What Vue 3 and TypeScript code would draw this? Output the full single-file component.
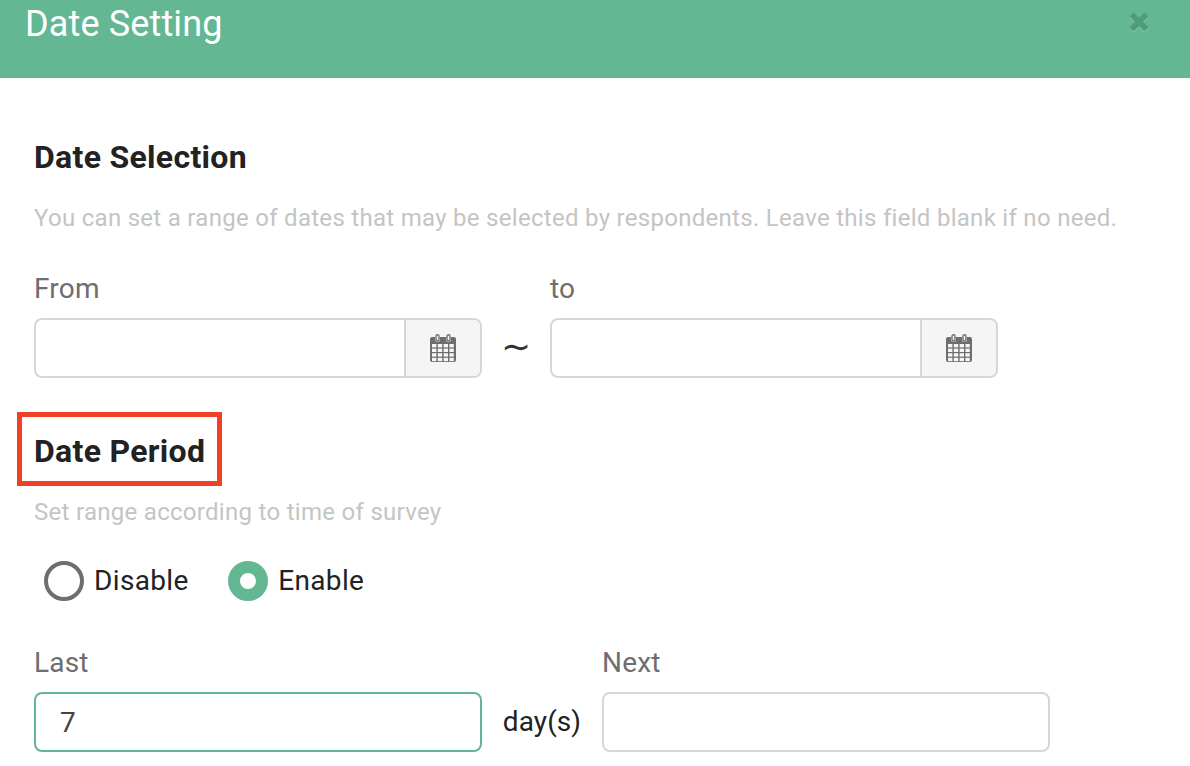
<script setup lang="ts">
const radios = [
  { label: 'Disable', on: false },
  { label: 'Enable', on: true },
]
const dateFields = [{ label: 'From' }, { label: 'to' }]
const cells: number[] = [0, 1, 2, 3]
</script>

<template>
  <div class="page">
    <header class="head">
      <span class="head-title">Date Setting</span>
      <svg class="close" width="22" height="23" viewBox="0 0 22 23">
        <path d="M3.5 4.5 L18.5 19.5 M18.5 4.5 L3.5 19.5" stroke="#8fcdb2" stroke-width="6" fill="none" />
        <path d="M3.5 3.5 L18.5 18.5 M18.5 3.5 L3.5 18.5" stroke="#4f9c7c" stroke-width="6" fill="none" />
      </svg>
    </header>
    <main class="body">
      <h2 class="title first">Date Selection</h2>
      <p class="hint">You can set a range of dates that may be selected by respondents. Leave this field blank if no need.</p>
      <div class="row">
        <template v-for="(f, i) in dateFields" :key="f.label">
          <div class="field">
            <label class="label">{{ f.label }}</label>
            <div class="box date">
              <div class="box-main"></div>
              <div class="addon">
                <svg width="26" height="28" viewBox="0 0 26 28">
                  <path fill="#6e6e6e" fill-rule="evenodd" d="M2 3h3v2.5a2.5 2.5 0 0 0 5 0V3h6v2.5a2.5 2.5 0 0 0 5 0V3h3a2 2 0 0 1 2 2v21a2 2 0 0 1-2 2H2a2 2 0 0 1-2-2V5a2 2 0 0 1 2-2z" />
                  <path fill="none" stroke="#6e6e6e" stroke-width="1.4" d="M6 5.5V2.2a1.5 1.5 0 0 1 3 0v3.3a1.5 1.5 0 0 1-3 0zM17 5.5V2.2a1.5 1.5 0 0 1 3 0v3.3a1.5 1.5 0 0 1-3 0z" />
                  <g fill="#f5f5f5">
                    <template v-for="r in cells" :key="r">
                      <rect v-for="c in cells" :key="c" :x="2 + c * 5.8" :y="10 + r * 4.6" width="4.4" height="3.4" />
                    </template>
                  </g>
                </svg>
              </div>
            </div>
          </div>
          <span v-if="i === 0" class="tilde">∼</span>
        </template>
      </div>
      <h2 class="title boxed">Date Period</h2>
      <p class="hint second">Set range according to time of survey</p>
      <div class="radios">
        <div v-for="r in radios" :key="r.label" class="radio">
          <span class="dot" :class="{ on: r.on }"></span>
          <span class="radio-label">{{ r.label }}</span>
        </div>
      </div>
      <div class="row period">
        <div class="field">
          <label class="label">Last</label>
          <div class="box active"><span class="value">7</span></div>
        </div>
        <span class="unit">day(s)</span>
        <div class="field">
          <label class="label">Next</label>
          <div class="box"></div>
        </div>
      </div>
    </main>
  </div>
</template>

<style>
html, body { margin: 0; background: #fff; overflow: hidden; }
</style>

<style scoped>
.page {
  width: 1190px;
  height: 766px;
  overflow: hidden;
  font-family: Roboto, "Liberation Sans", sans-serif;
  color: #222;
  background: #fff;
}
.head {
  height: 78px;
  background: #63b793;
  display: flex;
  justify-content: space-between;
  align-items: flex-start;
  padding: 0 40px 0 25px;
  box-sizing: border-box;
}
.head-title {
  color: #fff;
  font-size: 36px;
  line-height: 48px;
  letter-spacing: 0.15px;
}
.close { margin-top: 11px; }
.body { padding: 0 34px; }
.title {
  margin: 0;
  font-size: 32px;
  line-height: 40px;
  font-weight: 700;
  letter-spacing: 0.3px;
  color: #222;
}
.first { padding-top: 59px; }
.hint {
  margin: 25px 0 0;
  font-size: 24px;
  line-height: 32px;
  color: #c4c4c4;
  letter-spacing: 0.29px;
}
.row {
  display: flex;
  align-items: flex-end;
  margin-top: 37px;
}
.field { display: flex; flex-direction: column; width: 448px; }
.label {
  font-size: 28px;
  line-height: 36px;
  letter-spacing: 0.2px;
  color: #6e6e6e;
  margin-bottom: 11px;
}
.box {
  height: 60px;
  box-sizing: border-box;
  border: 2px solid #d6d6d6;
  border-radius: 8px;
  display: flex;
  align-items: center;
  overflow: hidden;
}
.box-main { flex: 1; }
.addon {
  width: 74px;
  height: 100%;
  background: #f5f5f5;
  border-left: 2px solid #d6d6d6;
  display: flex;
  align-items: center;
  justify-content: center;
}
.tilde {
  width: 68px;
  height: 60px;
  font-family: "DejaVu Sans", sans-serif;
  font-size: 36px;
  line-height: 58px;
  color: #333;
  text-align: center;
}
.boxed {
  display: inline-block;
  margin: 34px 0 0 -17px;
  padding: 15px 12px 11px;
  border: 5px solid #ee4128;
  line-height: 38px;
  box-sizing: border-box;
}
.second { margin-top: 10px; }
.radios {
  display: flex;
  gap: 39.5px;
  margin: 33px 0 0 10px;
}
.radio { display: flex; align-items: center; gap: 10px; }
.dot {
  width: 40px;
  height: 40px;
  box-sizing: border-box;
  border: 4px solid #6e6e6e;
  border-radius: 50%;
}
.dot.on { border: 12px solid #63b793; background: #fff; }
.radio-label { font-size: 28px; line-height: 40px; color: #222; letter-spacing: 0.35px; }
.period { margin-top: 44px; }
.active { border-color: #63b793; }
.value { padding-left: 24px; font-size: 28px; color: #444; }
.unit {
  width: 120px;
  height: 60px;
  font-size: 28px;
  line-height: 60px;
  letter-spacing: 0.1px;
  text-align: center;
}
</style>
